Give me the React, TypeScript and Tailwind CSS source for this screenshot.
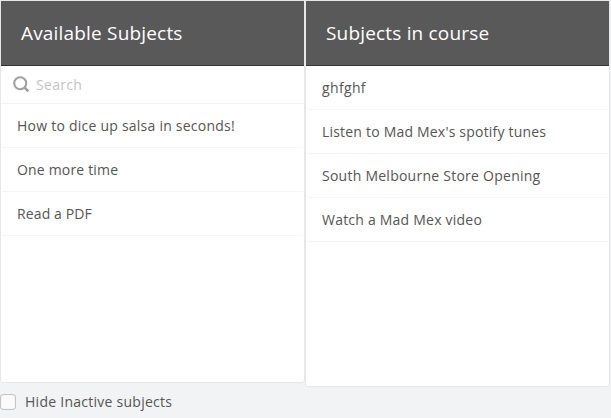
import type { ReactNode } from "react";

type Subject = { name: string; tracking: string };

const available: Subject[] = [
  { name: "How to dice up salsa in seconds!", tracking: "tracking-[0.235px]" },
  { name: "One more time", tracking: "tracking-[0.18px]" },
  { name: "Read a PDF", tracking: "tracking-[0.12px]" },
];
const inCourse: Subject[] = [
  { name: "ghfghf", tracking: "tracking-[0.35px]" },
  { name: "Listen to Mad Mex's spotify tunes", tracking: "tracking-[0.2px]" },
  { name: "South Melbourne Store Opening", tracking: "tracking-[0.25px]" },
  { name: "Watch a Mad Mex video", tracking: "tracking-[0.22px]" },
];

function Panel({ title, size, children }: { title: string; size: string; children: ReactNode }) {
  return (
    <section
      className={`${size} w-[305px] shrink-0 overflow-hidden rounded-b-[3px] border border-[#e6e7e7] bg-white`}
    >
      <h2 className="h-[65px] border-b border-[#333333] bg-[#595959] pl-5 text-[19px] leading-[64px] font-normal tracking-[0.18px] text-white">
        {title}
      </h2>
      {children}
    </section>
  );
}

function SubjectList({ items }: { items: Subject[] }) {
  return (
    <ul className="px-px">
      {items.map(({ name, tracking }) => (
        <li
          key={name}
          className={`${tracking} h-11 border-b border-[#f4f5f5] pl-[15px] text-[14px] leading-[43px]`}
        >
          {name}
        </li>
      ))}
    </ul>
  );
}

export default function App() {
  return (
    <main className="h-[418px] w-[611px] overflow-hidden bg-[#f2f3f5] font-['Open_Sans',sans-serif] text-[#555555]">
      <div className="flex h-[394px] items-start">
        <Panel title="Available Subjects" size="h-[383px]">
          <div className="flex h-[38px] items-center border-b border-[#f3f3f3] pl-3">
            <svg className="-mt-px size-4 shrink-0" viewBox="0 0 16 16" fill="none" stroke="#a0a0a0" strokeWidth="2.1">
              <circle cx="7.2" cy="7.2" r="6" />
              <path d="M11 11 15.4 15.4" strokeWidth="2.6" />
            </svg>
            <input
              className="ml-[7px] w-60 text-[14px] tracking-[0.3px] outline-none placeholder:text-[#c4c4c4]"
              placeholder="Search"
            />
          </div>
          <SubjectList items={available} />
        </Panel>
        <Panel title="Subjects in course" size="h-[387px]">
          <SubjectList items={inCourse} />
        </Panel>
      </div>
      <label className="flex h-4 items-center text-[14px]">
        <input
          type="checkbox"
          className="size-4 appearance-none rounded-[3px] border border-[#c5c5c5] bg-[#fafafa] shadow-[inset_0_0_1px_#c5c5c5]"
        />
        <span className="-mt-0.5 ml-[9px] tracking-[0.26px]">Hide Inactive subjects</span>
      </label>
    </main>
  );
}
